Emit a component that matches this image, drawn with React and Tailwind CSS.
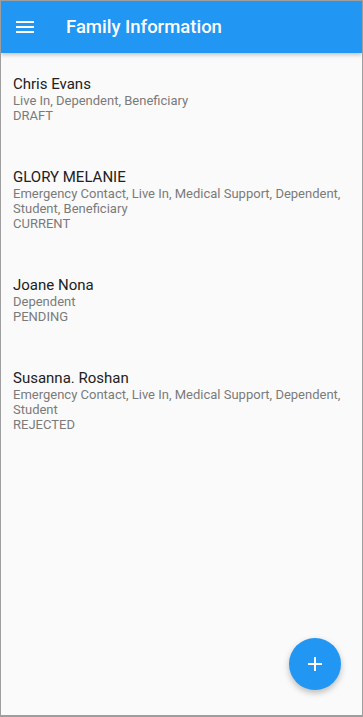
import React from 'react';

const members = [
    { name: 'Chris Evans', roles: 'Live In, Dependent, Beneficiary', status: 'DRAFT' },
    { name: 'GLORY MELANIE', roles: 'Emergency Contact, Live In, Medical Support, Dependent, Student, Beneficiary', status: 'CURRENT' },
    { name: 'Joane Nona', roles: 'Dependent', status: 'PENDING' },
    { name: 'Susanna. Roshan', roles: 'Emergency Contact, Live In, Medical Support, Dependent, Student', status: 'REJECTED' },
];

const MenuIcon = () => (
    <svg width="24" height="24" viewBox="0 0 24 24" fill="white">
        <path d="M3 18h18v-2H3v2zm0-5h18v-2H3v2zm0-7v2h18V6H3z" />
    </svg>
);

const App = () => {
    return (
        <div
            className="relative w-[363px] h-[717px] overflow-hidden border border-[#9e9e9e] border-b-2 bg-[#fafafa] flex flex-col"
            style={{ fontFamily: 'Roboto, "Noto Sans", sans-serif' }}
        >
            {/* App bar */}
            <header className="h-[52px] shrink-0 bg-[#2196f3] flex items-center pl-3 shadow-[0_2px_4px_rgba(0,0,0,0.22)] z-10">
                <MenuIcon />
                <h1 className="ml-[29px] mt-[2px] text-white text-[18.5px] font-medium">Family Information</h1>
            </header>

            {/* Family list */}
            <div className="flex-1 flex flex-col gap-[45px] pt-[22px] px-3">
                {members.map((m) => (
                    <div key={m.name} className="flex flex-col">
                        <p className="text-[15px] leading-[18px] text-[#212121]">{m.name}</p>
                        <p className="text-[13px] leading-[15px] text-[#7a7a7a]">{m.roles}</p>
                        <p className="text-[13px] leading-[15px] text-[#7a7a7a]">{m.status}</p>
                    </div>
                ))}
            </div>

            {/* FAB */}
            <button className="absolute right-[21px] bottom-[25px] w-[52px] h-[52px] rounded-full bg-[#2196f3] flex items-center justify-center shadow-[0_3px_6px_rgba(0,0,0,0.25)]">
                <svg width="16" height="16" viewBox="0 0 16 16" stroke="white" strokeWidth="2">
                    <path d="M8 1v14M1 8h14" />
                </svg>
            </button>
        </div>
    );
};

export default App;
